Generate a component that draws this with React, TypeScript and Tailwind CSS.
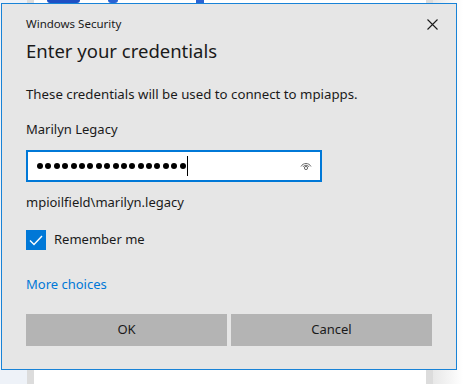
import React from 'react';

const font = { fontFamily: '"Noto Sans", "Segoe UI", sans-serif' };

function EyeIcon() {
  return (
    <svg width="12" height="10" viewBox="0 0 12 10" fill="none" stroke="#6b6b6b" strokeWidth="1">
      <path d="M1 5.5 C3 1.5 9 1.5 11 5.5" />
      <path d="M3 6 C4 3.8 8 3.8 9 6" />
      <circle cx="6" cy="7" r="1.6" />
    </svg>
  );
}

function CloseIcon() {
  return (
    <svg width="11" height="11" viewBox="0 0 11 11" stroke="#1a1a1a" strokeWidth="1.1">
      <path d="M0.5 0.5 L10.5 10.5 M10.5 0.5 L0.5 10.5" />
    </svg>
  );
}

function Checkbox() {
  return (
    <div className="w-[20px] h-[20px] bg-[#0078d7] flex items-center justify-center">
      <svg width="14" height="11" viewBox="0 0 14 11" fill="none" stroke="white" strokeWidth="1.4">
        <path d="M1 5.5 L5 9.5 L13 1" />
      </svg>
    </div>
  );
}

function PasswordField() {
  const dots = Array.from({ length: 18 });
  return (
    <div className="h-[32px] border-2 border-[#0078d7] bg-white flex items-center pl-[9px] pr-[8px]">
      <div className="flex items-center gap-[2.4px]">
        {dots.map((_, i) => (
          <div key={i} className="w-[6px] h-[6px] rounded-full bg-black" />
        ))}
      </div>
      <div className="w-px h-[20px] bg-black ml-[1px]" />
      <div className="flex-1" />
      <EyeIcon />
    </div>
  );
}

export default function App() {
  return (
    <div className="relative w-[463px] h-[384px] overflow-hidden bg-[#eef2f8]" style={font}>
      {/* desktop window behind the dialog */}
      <div className="absolute left-[27px] top-0 w-[406px] h-[384px] bg-[#dcdcdc] px-[7px] pb-0">
        <div className="w-full h-full bg-white" />
      </div>
      <div className="absolute left-[433px] top-0 w-[30px] h-[384px] bg-gradient-to-r from-[#e8e8e8] to-white" />
      <div className="absolute left-[47px] top-0 w-[33px] h-[3px] bg-[#1e4fc4] rounded-b-sm" />
      <div className="absolute left-[108px] top-0 w-[10px] h-[3px] bg-[#2a63d4] rounded-b-full" />
      <div className="absolute left-[196px] top-0 w-[8px] h-[3px] bg-[#2a63d4]" />

      {/* dialog */}
      <div className="absolute left-[1px] top-[3px] w-[456px] h-[367px] bg-[#e6e6e6] border border-[#1883d7] flex flex-col">
        <div className="flex items-center justify-between pl-[24px] pr-[18px] pt-[9px] h-[31px]">
          <span className="text-[11.5px] text-[#1a1a1a]">Windows Security</span>
          <CloseIcon />
        </div>
        <div className="px-[24px] flex flex-col">
          <div className="text-[18.5px] text-[#1a1a1a] leading-[26px] mt-[3px]">Enter your credentials</div>
          <div className="text-[13.25px] text-[#1a1a1a] leading-[18px] mt-[21px]">
            These credentials will be used to connect to mpiapps.
          </div>
          <div className="text-[13px] text-[#1a1a1a] leading-[18px] mt-[17px]">Marilyn Legacy</div>
          <div className="mt-[12px] w-[296px]">
            <PasswordField />
          </div>
          <div className="text-[13px] text-[#1a1a1a] leading-[18px] mt-[11px]">mpioilfield\marilyn.legacy</div>
          <div className="flex items-center gap-[8px] mt-[19px]">
            <Checkbox />
            <span className="text-[13px] text-[#1a1a1a]">Remember me</span>
          </div>
          <div className="text-[13px] text-[#0078d7] leading-[18px] mt-[25px]">More choices</div>
          <div className="grid grid-cols-2 gap-[4px] mt-[21px]">
            <button className="h-[32px] bg-[#b4b4b4] text-[13px] text-[#1a1a1a]">OK</button>
            <button className="h-[32px] bg-[#b4b4b4] text-[13px] text-[#1a1a1a]">Cancel</button>
          </div>
        </div>
      </div>
    </div>
  );
}
